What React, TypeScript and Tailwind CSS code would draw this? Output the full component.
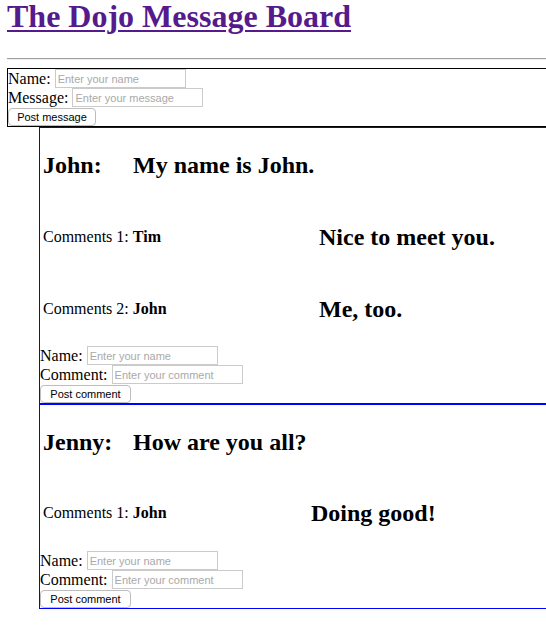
import React from "react";

const serif = { fontFamily: '"Liberation Serif", "Times New Roman", serif' };

function Field({ label, placeholder }: { label: string; placeholder: string }) {
  return (
    <div className="flex items-center h-[19px] text-[16px] text-black">
      <span className="mr-[4px] leading-[19px]">{label}</span>
      <input
        placeholder={placeholder}
        className="w-[131px] h-[19px] border border-[#cbcbcb] px-[2px] text-[11px] bg-white outline-none placeholder:text-[#a9a9a9] font-['Liberation_Sans',Arial,sans-serif]"
      />
    </div>
  );
}

function Btn({ label, w }: { label: string; w: string }) {
  return (
    <div className="flex items-start h-[19px] pt-[1px]">
      <button
        className={`${w} h-[18px] border border-[#bdbdbd] rounded-[4px] bg-white text-[11px] text-black leading-[16px] font-['Liberation_Sans',Arial,sans-serif]`}
      >
        {label}
      </button>
    </div>
  );
}

type Comment = { n: number; by: string; text: string; w: string; gapTop: string };

function Message({
  name,
  text,
  comments,
  formGap,
}: {
  name: string;
  text: string;
  comments: Comment[];
  formGap: string;
}) {
  return (
    <div className="ml-[32px] w-[620px] border border-[#0000ff] -mt-[0px]">
      <div className="mt-[23px] pl-[3px] h-[28px] flex items-center text-[24px] font-bold leading-[28px]">
        <span className="w-[90px]">{name}</span>
        <span>{text}</span>
      </div>
      {comments.map((c) => (
        <div key={c.n} className={`${c.gapTop} pl-[3px] h-[28px] flex items-center`}>
          <span className={`${c.w} text-[16px] leading-[18px]`}>
            Comments {c.n}: <b>{c.by}</b>
          </span>
          <span className="text-[24px] font-bold leading-[28px]">{c.text}</span>
        </div>
      ))}
      <div className={formGap}>
        <Field label="Name:" placeholder="Enter your name" />
        <Field label="Comment:" placeholder="Enter your comment" />
        <Btn label="Post comment" w="w-[91px]" />
      </div>
    </div>
  );
}

export default function App() {
  return (
    <div className="w-[546px] h-[640px] overflow-hidden bg-white text-black" style={serif}>
      <div className="pl-[7px] w-[700px]">
        <h1 className="h-[32px] text-[32px] font-bold leading-[32px]">
          <a
            href="#"
            className="text-[#551a8b] underline decoration-2 underline-offset-[3px]"
          >
            The Dojo Message Board
          </a>
        </h1>
        <div className="mt-[26px] h-[2px] border-t border-t-[#a0a0a0] border-b border-b-[#eeeeee]" />
        <div className="mt-[8px] w-[620px] border border-black pl-[0px]">
          <Field label="Name:" placeholder="Enter your name" />
          <Field label="Message:" placeholder="Enter your message" />
          <Btn label="Post message" w="w-[88px]" />
        </div>
        <Message
          name="John:"
          text="My name is John."
          comments={[
            { n: 1, by: "Tim", text: "Nice to meet you.", w: "w-[276px]", gapTop: "mt-[44px]" },
            { n: 2, by: "John", text: "Me, too.", w: "w-[276px]", gapTop: "mt-[44px]" },
          ]}
          formGap="mt-[23px]"
        />
        <Message
          name="Jenny:"
          text="How are you all?"
          comments={[
            { n: 1, by: "John", text: "Doing good!", w: "w-[268px]", gapTop: "mt-[43px]" },
          ]}
          formGap="mt-[24px]"
        />
      </div>
    </div>
  );
}
